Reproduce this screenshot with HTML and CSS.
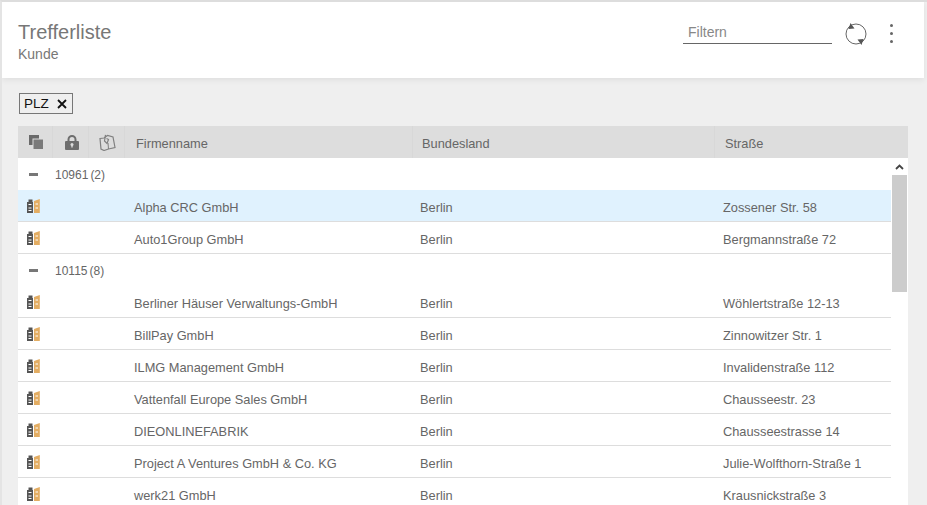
FILE: index.html
```html
<!DOCTYPE html>
<html lang="de">
<head>
<meta charset="utf-8">
<title>Trefferliste</title>
<link rel="stylesheet" href="styles.css">
</head>
<body>
<div class="page">
  <header class="top">
    <div class="titles">
      <h1 class="title">Trefferliste</h1>
      <div class="subtitle">Kunde</div>
    </div>
    <div class="tools">
      <div class="filter">Filtern</div>
      <svg class="refresh" width="24" height="24" viewBox="0 0 24 24"><circle cx="12" cy="12" r="10" fill="none" stroke="#666" stroke-width="1"/><path d="M6.500 1L10.500 6.500 4.500 7Z M17.500 23L13.500 17.500 19.500 17Z" fill="#555"/></svg>
      <div class="kebab"><i></i><i></i><i></i></div>
    </div>
  </header>
  <div class="chips"><span class="chip">PLZ<svg class="chip-x" width="10" height="10" viewBox="0 0 10 10"><path d="M1 1L9 9M9 1L1 9" stroke="#111" stroke-width="1.800"/></svg></span></div>
  <section class="grid">
    <div class="head">
      <div class="hc ic"><svg width="14" height="14" viewBox="0 0 14 14"><path d="M0 0h10v3.500H3.500V10H0z" fill="#6a6a6a"/><path d="M4.500 4.500H14V14H4.500z" fill="#7a7a7a"/></svg></div>
      <div class="hc ic"><svg width="14" height="15" viewBox="0 0 14 15"><path d="M0 7a1 1 0 0 1 1-1h12a1 1 0 0 1 1 1v7a1 1 0 0 1-1 1H1a1 1 0 0 1-1-1z" fill="#6e6e6e"/><path d="M3.500 6.500V4.500a3.500 3.500 0 0 1 7 0v2" fill="none" stroke="#6e6e6e" stroke-width="2"/><circle cx="7" cy="9.500" r="1.500" fill="#ddd"/><path d="M6.300 10h1.400v2.500H6.300z" fill="#ddd"/></svg></div>
      <div class="hc ic"><svg width="17" height="17" viewBox="0 0 17 17"><path d="M1 4.500L5 4 8.500 1.500 14 3 16 13.500 9.500 15 5 16.500 2 15z" fill="none" stroke="#808080" stroke-width="1.200"/><path d="M6.500 .8L5.500 7 8 9.500 9.500 5.500 7.500 4.500" fill="none" stroke="#808080" stroke-width="1.200"/><path d="M9.500 15L9 9" stroke="#808080" stroke-width="1"/></svg></div>
      <div class="hc c-name">Firmenname</div>
      <div class="hc c-land">Bundesland</div>
      <div class="hc c-str">Straße</div>
    </div>
    <div class="body">
      <div class="rows">
        <div class="row group"><span class="minus"></span><span class="plz">10961</span><span class="count">(2)</span></div>
        <div class="row sel"><svg class="book" viewBox="0 0 13 14"><use href="#books"/></svg><span class="name">Alpha CRC GmbH</span><span class="land">Berlin</span><span class="str">Zossener Str. 58</span></div>
        <div class="row"><svg class="book" viewBox="0 0 13 14"><use href="#books"/></svg><span class="name">Auto1Group GmbH</span><span class="land">Berlin</span><span class="str">Bergmannstraße 72</span></div>
        <div class="row group"><span class="minus"></span><span class="plz">10115</span><span class="count">(8)</span></div>
        <div class="row"><svg class="book" viewBox="0 0 13 14"><use href="#books"/></svg><span class="name">Berliner Häuser Verwaltungs-GmbH</span><span class="land">Berlin</span><span class="str">Wöhlertstraße 12-13</span></div>
        <div class="row"><svg class="book" viewBox="0 0 13 14"><use href="#books"/></svg><span class="name">BillPay GmbH</span><span class="land">Berlin</span><span class="str">Zinnowitzer Str. 1</span></div>
        <div class="row"><svg class="book" viewBox="0 0 13 14"><use href="#books"/></svg><span class="name">ILMG Management GmbH</span><span class="land">Berlin</span><span class="str">Invalidenstraße 112</span></div>
        <div class="row"><svg class="book" viewBox="0 0 13 14"><use href="#books"/></svg><span class="name">Vattenfall Europe Sales GmbH</span><span class="land">Berlin</span><span class="str">Chausseestr. 23</span></div>
        <div class="row"><svg class="book" viewBox="0 0 13 14"><use href="#books"/></svg><span class="name">DIEONLINEFABRIK</span><span class="land">Berlin</span><span class="str">Chausseestrasse 14</span></div>
        <div class="row"><svg class="book" viewBox="0 0 13 14"><use href="#books"/></svg><span class="name">Project A Ventures GmbH &amp; Co. KG</span><span class="land">Berlin</span><span class="str">Julie-Wolfthorn-Straße 1</span></div>
        <div class="row"><svg class="book" viewBox="0 0 13 14"><use href="#books"/></svg><span class="name">werk21 GmbH</span><span class="land">Berlin</span><span class="str">Krausnickstraße 3</span></div>
      </div>
      <div class="scroll">
        <svg class="up" width="9" height="6" viewBox="0 0 9 6"><path d="M1 5L4.500 1.500 8 5" fill="none" stroke="#444" stroke-width="1.800"/></svg>
        <div class="thumb"></div>
      </div>
    </div>
  </section>
</div>
<svg class="defs" width="0" height="0"><defs><g id="books"><path d="M0 3h6v11H0z" fill="#555"/><path d="M1.500 0.500H5.500V3H1.500z" fill="#555"/><path d="M1.500 5.500h3M1.500 9h3M1.500 11.500h3" stroke="#fff" stroke-width="1"/><path d="M7 2L12.800 0V14H7z" fill="#e3ad63"/><path d="M8.500 5h2.500M8.500 9h2.500" stroke="#fff" stroke-width="1"/></g></defs></svg>
</body>
</html>
```
FILE: styles.css
```css
* { box-sizing: border-box; }
html, body { margin: 0; height: 100%; }
body {
  background: #efefef;
  overflow: hidden;
  font-family: "Liberation Sans", Arial, sans-serif;
  font-size: 12.800px;
  color: #666;
}
.defs { display: block; height: 0; }
.page {
  height: 505px;
  overflow: hidden;
  border-top: 2px solid #ddd;
  border-left: 2px solid #e4e4e4;
  padding-right: 3px;
}
.top {
  height: 76px;
  background: #fff;
  box-shadow: 0 2px 6px rgba(0,0,0,.07);
  display: flex;
  justify-content: space-between;
  padding: 18px 17px 0 16px;
}
.title {
  margin: 0;
  font-size: 20px;
  font-weight: 400;
  line-height: 24px;
  color: #777;
}
.subtitle {
  font-size: 14px;
  line-height: 18px;
  margin-top: 1px;
  color: #777;
}
.tools { display: flex; align-items: flex-start; }
.filter {
  width: 149px;
  height: 24px;
  border-bottom: 1px solid #666;
  padding: 4px 0 0 5px;
  font-size: 14px;
  color: #888;
}
.refresh { margin: 2px 0 0 12px; }
.kebab {
  display: flex;
  flex-direction: column;
  gap: 5px;
  margin: 4px 14px 0 22px;
}
.kebab i { width: 3px; height: 3px; border-radius: 50%; background: #666; display: block; }
.chips { padding: 15px 0 0 17px; height: 48px; }
.chip {
  display: inline-flex;
  align-items: center;
  height: 21px;
  width: 54px;
  border: 1px solid #777;
  padding-left: 4px;
  font-size: 13.500px;
  color: #111;
}
.chip-x { margin-left: 8px; }
.grid { margin-left: 16px; width: 890px; }
.head {
  display: grid;
  grid-template-columns: 35px 36px 36px 288px 302px 193px;
  height: 32px;
  background: #ddd;
}
.hc {
  display: flex;
  align-items: center;
  border-right: 1px solid #d8d8d8;
  padding: 2px 0 0 11px;
  color: #666;
}
.c-land { padding-left: 9px; }
.c-str { padding-left: 10px; }
.hc:last-child { border-right: 0; }
.ic { justify-content: center; padding: 0 0 0 2px; }
.body { display: flex; background: #fff; height: 347px; }
.rows { width: 873px; }
.scroll { width: 17px; padding: 0 1px; }
.up { display: block; margin: 6px auto 5px; }
.thumb { width: 15px; height: 117px; background: #ccc; }
.row {
  height: 32px;
  display: flex;
  align-items: center;
  color: #666;
  border-bottom: 1px solid #ddd;
  padding-top: 3px;
  background: #fff;
}
.row.group { border-bottom: 0; padding-top: 2px; }
.row.sel { background: #e0f2fe; }
.book { margin: -2px 0 0 9px; flex: none; width: 13px; height: 14px; }
.name { margin-left: 94px; width: 286px; }
.land { width: 303px; }
.minus { width: 9px; height: 3px; background: #777; margin: -2px 0 0 11px; }
.plz { margin-left: 17px; font-size: 12px; }
.count { margin-left: 2px; font-size: 12px; }
```
